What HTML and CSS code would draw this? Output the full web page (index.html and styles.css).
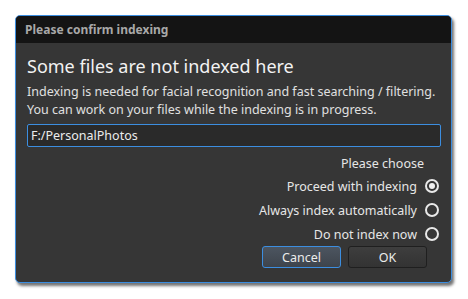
FILE: index.html
```html
<!DOCTYPE html>
<html lang="en">
<head>
    <meta charset="UTF-8">
    <title>Please confirm indexing</title>
    <link rel="stylesheet" href="styles.css">
</head>
<body>
    <div class="dialog">
        <div class="title-bar">Please confirm indexing</div>
        <div class="content">
            <h2 class="heading">Some files are not indexed here</h2>
            <p class="info">Indexing is needed for facial recognition and fast searching / filtering.<br>You can work on your files while the indexing is in progress.</p>
            <input class="path-input" type="text" value="F:/PersonalPhotos">

            <div class="choices">
                <div class="choose-label">Please choose</div>
                <label class="choice">Proceed with indexing <span class="radio checked"></span></label>
                <label class="choice">Always index automatically <span class="radio"></span></label>
                <label class="choice">Do not index now <span class="radio"></span></label>
            </div>

            <div class="buttons">
                <button class="btn btn-default">Cancel</button>
                <button class="btn">OK</button>
            </div>
        </div>
    </div>
</body>
</html>
```

FILE: styles.css
```css
html {
    background: #ffffff;
}
body {
    margin: 0;
    padding: 15px;
    font-family: "Noto Sans", "Open Sans", sans-serif;
    color: #e6e6e6;
}
.dialog {
    width: 435px;
    height: 266px;
    border: 1px solid #3c8ee0;
    border-radius: 5px;
    background: #363636;
    box-shadow: 2px 3px 3px rgba(0,0,0,0.55);
    overflow: hidden;
}
.title-bar {
    height: 27px;
    line-height: 27px;
    background: #141414;
    color: #a8a8a8;
    font-size: 12px;
    font-weight: bold;
    padding-left: 9px;
}
.content {
    padding: 0 11px 0 11px;
}
.heading {
    margin: 10px 0 0 0;
    font-size: 18px;
    font-weight: normal;
    color: #f2f2f2;
    line-height: 26px;
}
.info {
    margin: 4px 0 0 0;
    font-size: 12.5px;
    line-height: 18px;
    color: #e0e0e0;
}
.path-input {
    display: block;
    box-sizing: border-box;
    width: 414px;
    height: 23px;
    margin-top: 5px;
    padding: 0 3px;
    background: #2a2a2a;
    border: 1px solid #3c8ee0;
    border-radius: 2px;
    color: #ececec;
    font-family: inherit;
    font-size: 12.5px;
    outline: none;
}
.choices {
    display: flex;
    flex-direction: column;
    align-items: flex-end;
    padding-right: 1px;
    margin-top: 7px;
    font-size: 12.5px;
}
.choose-label {
    line-height: 20px;
    padding-right: 15px;
}
.choice {
    display: flex;
    align-items: center;
    gap: 8px;
    height: 24px;
}
.radio {
    box-sizing: border-box;
    width: 14px;
    height: 14px;
    border: 2px solid #e8e8e8;
    border-radius: 50%;
    display: flex;
    align-items: center;
    justify-content: center;
}
.radio.checked::after {
    content: "";
    width: 6px;
    height: 6px;
    border-radius: 50%;
    background: #f0f0f0;
}
.buttons {
    display: flex;
    justify-content: flex-end;
    gap: 7px;
    padding-right: 13px;
    margin-top: 0;
}
.btn {
    width: 79px;
    height: 22px;
    border: 1px solid #1f1f1f;
    border-radius: 3px;
    background: linear-gradient(#3e3e3e, #333333);
    color: #ececec;
    font-family: inherit;
    font-size: 12.5px;
    padding: 0;
}
.btn-default {
    border-color: #3c8ee0;
    background: linear-gradient(#4c5560, #3e444c);
}
```
